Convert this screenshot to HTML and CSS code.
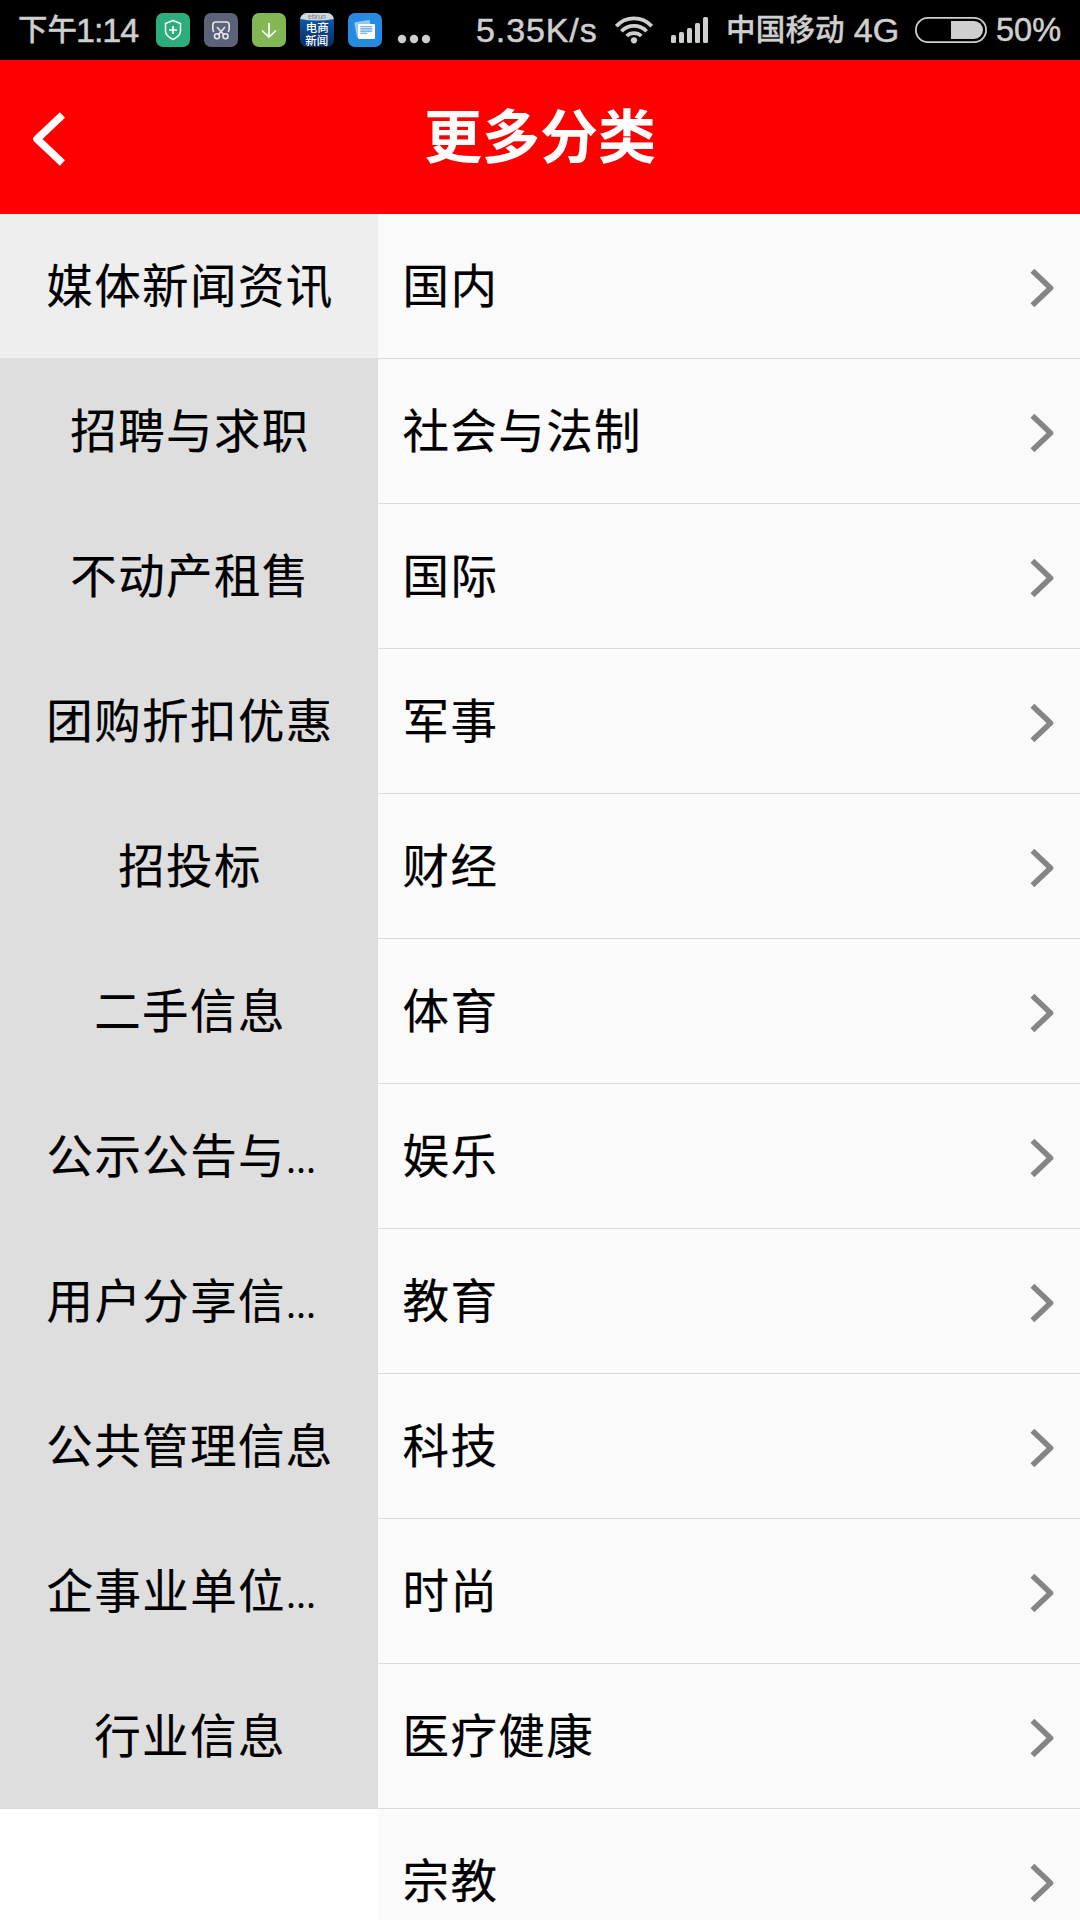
FILE: index.html
```html
<!DOCTYPE html>
<html lang="zh-CN">
<head>
<meta charset="utf-8">
<title>更多分类</title>
<link rel="stylesheet" href="styles.css">
</head>
<body>
<div class="status">
  <div class="time"><span class="han">下午</span><span class="latin clock">1:14</span></div>
  <div class="apps">
    <svg class="app" viewBox="0 0 34 34"><rect width="34" height="34" rx="7" fill="#2bae7c"/><path d="M17 7.500 24.500 10.500V18c0 4-3.500 6.500-7.500 8.500C13 24.500 9.500 22 9.500 18v-7.500z" fill="none" stroke="#fff" stroke-width="1.500" stroke-linejoin="round"/><path d="M17 13v8M13 17h8" stroke="#fff" stroke-width="1.700"/></svg>
    <svg class="app" viewBox="0 0 34 34"><rect width="34" height="34" rx="7" fill="#5c6278"/><g fill="none" stroke="#e6e7ec" stroke-width="1.600"><path d="M10 19c-1-1-1.200-2-1.200-3.500V12q0-3 3-3h10.400q3 0 3 3v3.500c0 1.500-.2 2.500-1.200 3.500"/><path d="M13 14l7 8M21 14l-7 8"/><circle cx="13" cy="23.200" r="2.500"/><circle cx="21.500" cy="23.200" r="2.500"/></g></svg>
    <svg class="app" viewBox="0 0 34 34"><rect width="34" height="34" rx="7" fill="#83b755"/><path d="M17 10v14M10 17.500l7 6.500 7-6.500" fill="none" stroke="#fff" stroke-width="1.700"/></svg>
    <svg class="app" viewBox="0 0 34 34"><defs><linearGradient id="blue" x2="0" y2="1"><stop offset="0" stop-color="#1263ba"/><stop offset="1" stop-color="#072a5c"/></linearGradient><clipPath id="tile"><rect width="34" height="34" rx="7"/></clipPath></defs><g clip-path="url(#tile)"><rect width="34" height="34" fill="url(#blue)"/><path d="M0 0H34V6Q17 9 0 6z" fill="#d3d8df"/></g><text class="brand" x="17" y="5.800">ebrun</text><text class="tile-text" x="17.200" y="19.400">电商</text><text class="tile-text" x="16.800" y="32">新闻</text></svg>
    <svg class="app" viewBox="0 0 34 34"><rect width="34" height="34" rx="7" fill="#258ae0"/><path d="M6.300 9.500 21.500 6.800 24 22 9 24.500z" fill="#98c8f1"/><rect x="10" y="11" width="17" height="15" rx="1" fill="#fff"/><path d="M12.300 13.700h12M12.300 15.900h12M12.300 18.100h12M12.300 20.300h7" stroke="#4f9ce0" stroke-width="1.100"/></svg>
  </div>
  <svg class="more" viewBox="0 0 34 10"><g fill="#cfcfcf"><circle cx="5" cy="5" r="4.200"/><circle cx="17" cy="5" r="4.200"/><circle cx="29" cy="5" r="4.200"/></g></svg>
  <div class="speed latin">5.35K/s</div>
  <svg class="wifi" viewBox="0 0 38 28"><g fill="none" stroke="#cfcfcf" stroke-width="3.800"><path d="M1.200 10.200a24 24 0 0 1 35.600 0"/><path d="M6.400 15.300a17.500 17.500 0 0 1 25.200 0"/><path d="M11.700 20a10.500 10.500 0 0 1 14.600 0"/></g><circle cx="19" cy="24.300" r="3.100" fill="#cfcfcf"/></svg>
  <svg class="signal" viewBox="0 0 37 26"><g fill="#cfcfcf"><rect y="18" width="5" height="8" rx="1.500"/><rect x="8" y="15" width="5" height="11" rx="1.500"/><rect x="16" y="11" width="5" height="15" rx="1.500"/><rect x="24" y="6" width="5" height="20" rx="1.500"/><rect x="32" width="5" height="26" rx="1.500"/></g></svg>
  <div class="carrier"><span class="han">中国移动</span><span class="latin net">4G</span></div>
  <svg class="battery" viewBox="0 0 72 26"><rect x=".9" y=".9" width="70.200" height="24.200" rx="12.100" fill="none" stroke="#cfcfcf" stroke-width="1.800"/><path d="M36 4H59a9 9 0 0 1 0 18H36z" fill="#cfcfcf"/></svg>
  <div class="percent latin">50%</div>
</div>
<header class="header">
  <svg class="back" viewBox="0 0 32 54"><path d="M29.500 3 4 27 29.500 51" fill="none" stroke="#fff" stroke-width="7.600" stroke-linejoin="round"/></svg>
  <h1 class="title">更多分类</h1>
</header>
<main class="content">
  <nav class="categories">
    <div class="category active"><span class="label">媒体新闻资讯</span></div>
    <div class="category"><span class="label">招聘与求职</span></div>
    <div class="category"><span class="label">不动产租售</span></div>
    <div class="category"><span class="label">团购折扣优惠</span></div>
    <div class="category"><span class="label">招投标</span></div>
    <div class="category"><span class="label">二手信息</span></div>
    <div class="category"><span class="label cut">公示公告与<span class="dots">...</span></span></div>
    <div class="category"><span class="label cut">用户分享信<span class="dots">...</span></span></div>
    <div class="category"><span class="label">公共管理信息</span></div>
    <div class="category"><span class="label cut">企事业单位<span class="dots">...</span></span></div>
    <div class="category"><span class="label">行业信息</span></div>
  </nav>
  <div class="items">
    <div class="item">国内<svg class="arrow" viewBox="0 0 24 40"><use href="#chevron"/></svg></div>
    <div class="item">社会与法制<svg class="arrow" viewBox="0 0 24 40"><use href="#chevron"/></svg></div>
    <div class="item">国际<svg class="arrow" viewBox="0 0 24 40"><use href="#chevron"/></svg></div>
    <div class="item">军事<svg class="arrow" viewBox="0 0 24 40"><use href="#chevron"/></svg></div>
    <div class="item">财经<svg class="arrow" viewBox="0 0 24 40"><use href="#chevron"/></svg></div>
    <div class="item">体育<svg class="arrow" viewBox="0 0 24 40"><use href="#chevron"/></svg></div>
    <div class="item">娱乐<svg class="arrow" viewBox="0 0 24 40"><use href="#chevron"/></svg></div>
    <div class="item">教育<svg class="arrow" viewBox="0 0 24 40"><use href="#chevron"/></svg></div>
    <div class="item">科技<svg class="arrow" viewBox="0 0 24 40"><use href="#chevron"/></svg></div>
    <div class="item">时尚<svg class="arrow" viewBox="0 0 24 40"><use href="#chevron"/></svg></div>
    <div class="item">医疗健康<svg class="arrow" viewBox="0 0 24 40"><use href="#chevron"/></svg></div>
    <div class="item">宗教<svg class="arrow" viewBox="0 0 24 40"><use href="#chevron"/></svg></div>
  </div>
</main>
<svg width="0" height="0"><defs><path id="chevron" d="M2.400 2.800 20.500 20 2.400 37.200" fill="none" stroke="#858585" stroke-width="5.600" stroke-linejoin="round"/></defs></svg>
</body>
</html>
```
FILE: styles.css
```css
* { box-sizing: border-box; }
html, body { height: 1920px; }
body {
  margin: 0;
  width: 1080px;
  overflow: hidden;
  display: flex;
  flex-direction: column;
  background: #fff;
  color: #000;
  font-family: "Noto Sans CJK SC", sans-serif;
}
svg { display: block; flex: none; }

.status {
  flex: none;
  height: 60px;
  display: flex;
  align-items: center;
  padding-left: 18px;
  background: #000;
  color: #cfcfcf;
  white-space: nowrap;
}
.latin { font: 34px/60px "Liberation Sans", sans-serif; -webkit-text-stroke: 0.5px #cfcfcf; }
.han { font-size: 29.5px; font-weight: 500; line-height: 55px; -webkit-text-stroke: 0.3px #cfcfcf; }
.time, .carrier { display: flex; height: 60px; }
.time { width: 138px; }
.clock { letter-spacing: -1px; margin-left: -1px; }
.apps { display: flex; gap: 14px; }
.app { width: 34px; height: 34px; }
.brand { font: 7px "Liberation Sans", sans-serif; text-anchor: middle; fill: #6d7686; }
.tile-text { font-size: 11.5px; text-anchor: middle; fill: #fff; font-weight: 500; }
.more { width: 34px; height: 10px; margin: 18px 0 0 15px; }
.speed { width: 139px; margin-left: 45px; letter-spacing: 0.9px; }
.wifi { width: 38px; height: 28px; }
.signal { width: 37px; height: 26px; margin-left: 18px; }
.carrier { width: 189px; margin-left: 18px; }
.carrier .han { letter-spacing: 0.2px; }
.net { margin-left: 9px; }
.battery { width: 72px; height: 26px; }
.percent { margin-left: 9px; font-size: 32.5px; }

.header {
  flex: none;
  height: 154px;
  display: grid;
  grid-template-columns: 65px 1fr 65px;
  align-items: center;
  background: #f00;
  color: #fff;
}
.back { width: 32px; height: 54px; margin: 4px 0 0 33px; }
.title { margin: 0 0 9px; text-align: center; font-size: 58px; line-height: 84px; font-weight: 700; }

.content {
  flex: 1;
  display: flex;
  min-height: 0;
  font-size: 46.5px;
  line-height: 70px;
  letter-spacing: 1.4px;
  -webkit-text-stroke: 0.2px #000;
}
.categories { width: 378px; flex: none; }
.category {
  height: 145px;
  display: flex;
  justify-content: center;
  align-items: center;
  padding: 0 0 7px 2px;
  background: #dedede;
  border-bottom: 1px solid #dcdcdc;
}
.active { background: #eee; }
.label { height: 70px; white-space: nowrap; }
.cut { width: 287px; }
.dots { font-family: "Open Sans", sans-serif; font-size: 38px; line-height: 1; letter-spacing: 0; }
.items { flex: 1; background: #fafafa; overflow: hidden; }
.item {
  height: 145px;
  display: flex;
  align-items: center;
  justify-content: space-between;
  padding: 0 26px 7px 24.5px;
  border-bottom: 1px solid #dbdbdb;
}
.arrow { width: 24px; height: 40px; margin-top: 10px; }
```
